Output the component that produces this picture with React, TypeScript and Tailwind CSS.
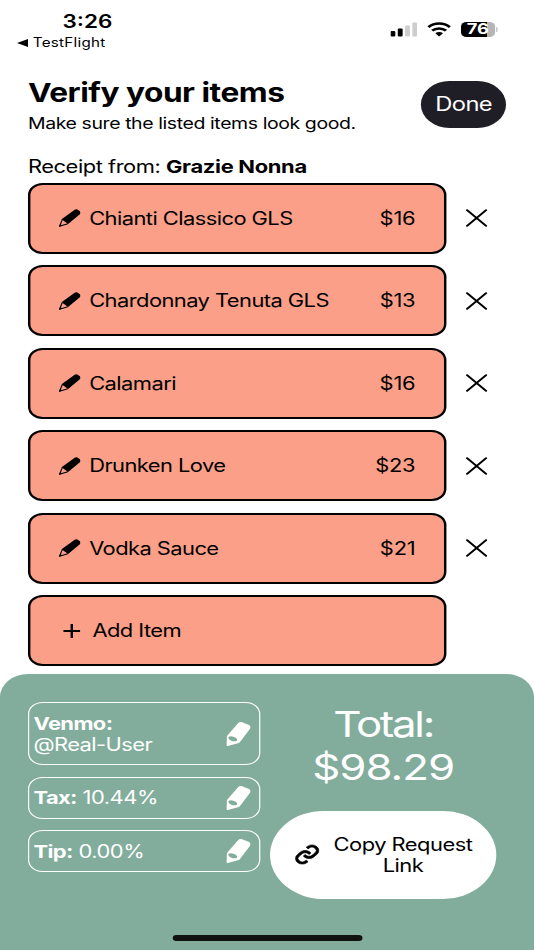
import { BiLink } from "react-icons/bi";

const items = [
  { name: "Chianti Classico GLS", price: "$16" },
  { name: "Chardonnay Tenuta GLS", price: "$13" },
  { name: "Calamari", price: "$16" },
  { name: "Drunken Love", price: "$23" },
  { name: "Vodka Sauce", price: "$21" },
];

const PencilIcon = () => (
  <svg viewBox="0 0 18 18" className="h-[18px] w-[18px] shrink-0">
    <path d="M2.6 10.2 13.4.8c.8-.7 1.9-.7 2.6 0l1.900 1.700c.7.7.7 1.700 0 2.400L8 14.900z" />
    <path d="M3.200 10.600 1 17.200l6.700-2.400" fill="none" stroke="black" strokeWidth="1" strokeLinejoin="round" />
    <path d="M.6 17.700 1.500 14.800l1.700 1.700z" />
  </svg>
);

const EditIcon = () => (
  <svg viewBox="0 0 20 24" className="h-6 w-5 shrink-0" fill="white">
    <path
      fillRule="evenodd"
      d="M.9 13.400 9.500 1.400C10.500.1 11.600-.2 13 .3l5.200 2.400c1.900.9 2.300 2.500 1.200 4.200l-8.100 13c-.5.700-.9 1-1.700 1.300L1.200 23.900c-.6.2-1-.1-1-.8L.5 15c0-.6.1-1 .4-1.600zM1.900 15.100c-.6 1.300.5 2.900 2.300 3.700 1.800.8 3.900.7 4.600-.4.600-1.200-.5-2.700-2.400-3.500-1.700-.7-3.800-.8-4.500.2z"
    />
  </svg>
);

const CloseIcon = () => (
  <svg viewBox="0 0 18 18" className="h-[18px] w-[18px] shrink-0" stroke="black" strokeWidth="1.8" strokeLinecap="round">
    <path d="M1 1.200 16.600 16.800M16.600 1.200 1 16.800" />
  </svg>
);

const StatusBar = () => (
  <div className="flex h-[54px] shrink-0 justify-between">
    <div className="pl-[14px] pt-[9px]">
      <p className="pl-[37.3px] text-[18.5px] font-semibold leading-[24px]">3:26</p>
      <div className="flex items-center gap-[4px] leading-[20px]">
        <svg viewBox="0 0 9 8" className="h-2 w-[9px]">
          <path d="M0 4 9 0v8z" />
        </svg>
        <span className="text-[12.5px] tracking-[0.2px]">TestFlight</span>
      </div>
    </div>
    <div className="flex items-start pr-[29.8px] pt-[22px]">
      <svg viewBox="0 0 22 15" className="mr-[8px] h-[15px] w-[22px]">
        <rect x="0" y="9" width="4" height="5.5" rx="1" />
        <rect x="6" y="6.5" width="4" height="8" rx="1" />
        <rect x="12" y="3.5" width="4" height="11" rx="1" fill="#cecece" />
        <rect x="18" y="0.5" width="4" height="14" rx="1" fill="#cecece" />
      </svg>
      <svg viewBox="0 0 20 15" className="mr-[8px] h-[15px] w-5" fill="none" stroke="black" strokeWidth="2.5">
        <path d="M1.2 5.2a12.5 12.5 0 0 1 17.6 0M4.3 8.7a8.2 8.2 0 0 1 11.4 0" />
        <path d="M10 14.5 6.8 11.3a4.6 4.6 0 0 1 6.4 0z" fill="black" stroke="none" />
      </svg>
      <div className="flex items-center gap-px">
        <div className="flex h-[15px] w-[28px] items-center justify-center rounded-[4.5px] bg-linear-to-r from-black from-76% to-[#b5b5b5] to-76% text-[15px] font-bold tracking-[-0.2px] text-white">
          76
        </div>
        <div className="h-[5px] w-[1.5px] rounded-r-full bg-[#b5b5b5]" />
      </div>
    </div>
  </div>
);

export default function App() {
  return (
    <div className="h-[950px] w-[534px] overflow-hidden bg-white">
      {/* the screen is drawn 439 wide and widened to fill the window */}
      <div className="flex h-[950px] w-[439px] origin-top-left scale-x-[1.2164] flex-col font-['Inter',sans-serif] text-black">
        <StatusBar />

        <header className="flex shrink-0 justify-between pl-[23px] pr-[22.6px] pt-[22px]">
          <div>
            <h1 className="text-[26px] font-bold leading-[34px] tracking-[-0.39px]">Verify your items</h1>
            <p className="text-[16px] leading-[27px] tracking-[-0.33px]">Make sure the listed items look good.</p>
          </div>
          <button className="mt-[5px] h-[46.5px] w-[70.5px] rounded-full bg-[#1f1d26] pt-px text-[19.5px] tracking-[-0.5px] text-white">
            Done
          </button>
        </header>

        <main className="shrink-0 pl-[23px]">
          <p className="mt-[16px] text-[18px] leading-[28px] tracking-[-0.39px]">
            Receipt from: <span className="font-bold tracking-[-0.25px]">Grazie Nonna</span>
          </p>
          <div className="mt-[1.8px] flex flex-col gap-[11.7px]">
            {items.map((item) => (
              <div key={item.name} className="flex items-center gap-[16.2px]">
                <div className="flex h-[70.8px] w-[343.7px] items-center rounded-[12px] border-[2.2px] border-black bg-[#fc9f88] pl-[23.3px] pr-[23.2px] text-[18px]">
                  <PencilIcon />
                  <span className="ml-[7px] grow tracking-[-0.46px]">{item.name}</span>
                  <span className="tracking-[-0.2px]">{item.price}</span>
                </div>
                <CloseIcon />
              </div>
            ))}
            <div className="flex h-[70.8px] w-[343.7px] items-center rounded-[12px] border-[2.2px] border-black bg-[#fc9f88] pl-[27px] text-[18px] tracking-[-0.46px]">
              <svg viewBox="0 0 14 14" className="h-[14px] w-[14px]" stroke="black" strokeWidth="2">
                <path d="M7 0v14M0 7h14" />
              </svg>
              <span className="ml-[10px]">Add Item</span>
            </div>
          </div>
        </main>

        <footer className="mt-[7.9px] flex grow flex-col rounded-t-[23px] bg-[#82ad9c] pl-[23px] text-white">
          <div className="flex pt-[28px]">
            <div className="flex w-[190.700px] flex-col gap-[11.2px] text-[18px] leading-[21.5px] tracking-[-0.48px]">
              <div className="flex h-[63.5px] items-center justify-between rounded-[12px] border border-white pl-[3.5px] pr-[7px]">
                <p className="pt-px">
                  <span className="font-bold">Venmo:</span>
                  <br />
                  @Real-User
                </p>
                <EditIcon />
              </div>
              <div className="flex h-[42px] items-center justify-between rounded-[12px] border border-white pl-[3.5px] pr-[7px]">
                <p className="pt-px">
                  <span className="font-bold">Tax:</span> <span className="tracking-[-0.38px]">10.44%</span>
                </p>
                <EditIcon />
              </div>
              <div className="flex h-[42px] items-center justify-between rounded-[12px] border border-white pl-[3.5px] pr-[7px]">
                <p className="pt-px">
                  <span className="font-bold">Tip:</span> <span className="tracking-[-0.38px]">0.00%</span>
                </p>
                <EditIcon />
              </div>
            </div>
            <div className="ml-[8.3px] w-[186px] text-center">
              <p className="pt-px text-[36px] leading-[43px] tracking-[-0.8px]">
                <span className="tracking-[-1.9px]">Total:</span>
                <br />
                $98.29
              </p>
              <button className="mt-[22px] flex h-[88px] w-full items-center rounded-full bg-white pl-[17px] text-[18px] leading-[21.5px] text-black">
                <BiLink size={27} strokeWidth={0.5} stroke="black" />
                <span className="ml-[2.3px] w-[126px] pt-px tracking-[-0.42px]">Copy Request Link</span>
              </button>
            </div>
          </div>
          <div className="mb-[9px] ml-[118.6px] mt-auto h-[6px] w-[156px] rounded-full bg-[#111]" />
        </footer>
      </div>
    </div>
  );
}
